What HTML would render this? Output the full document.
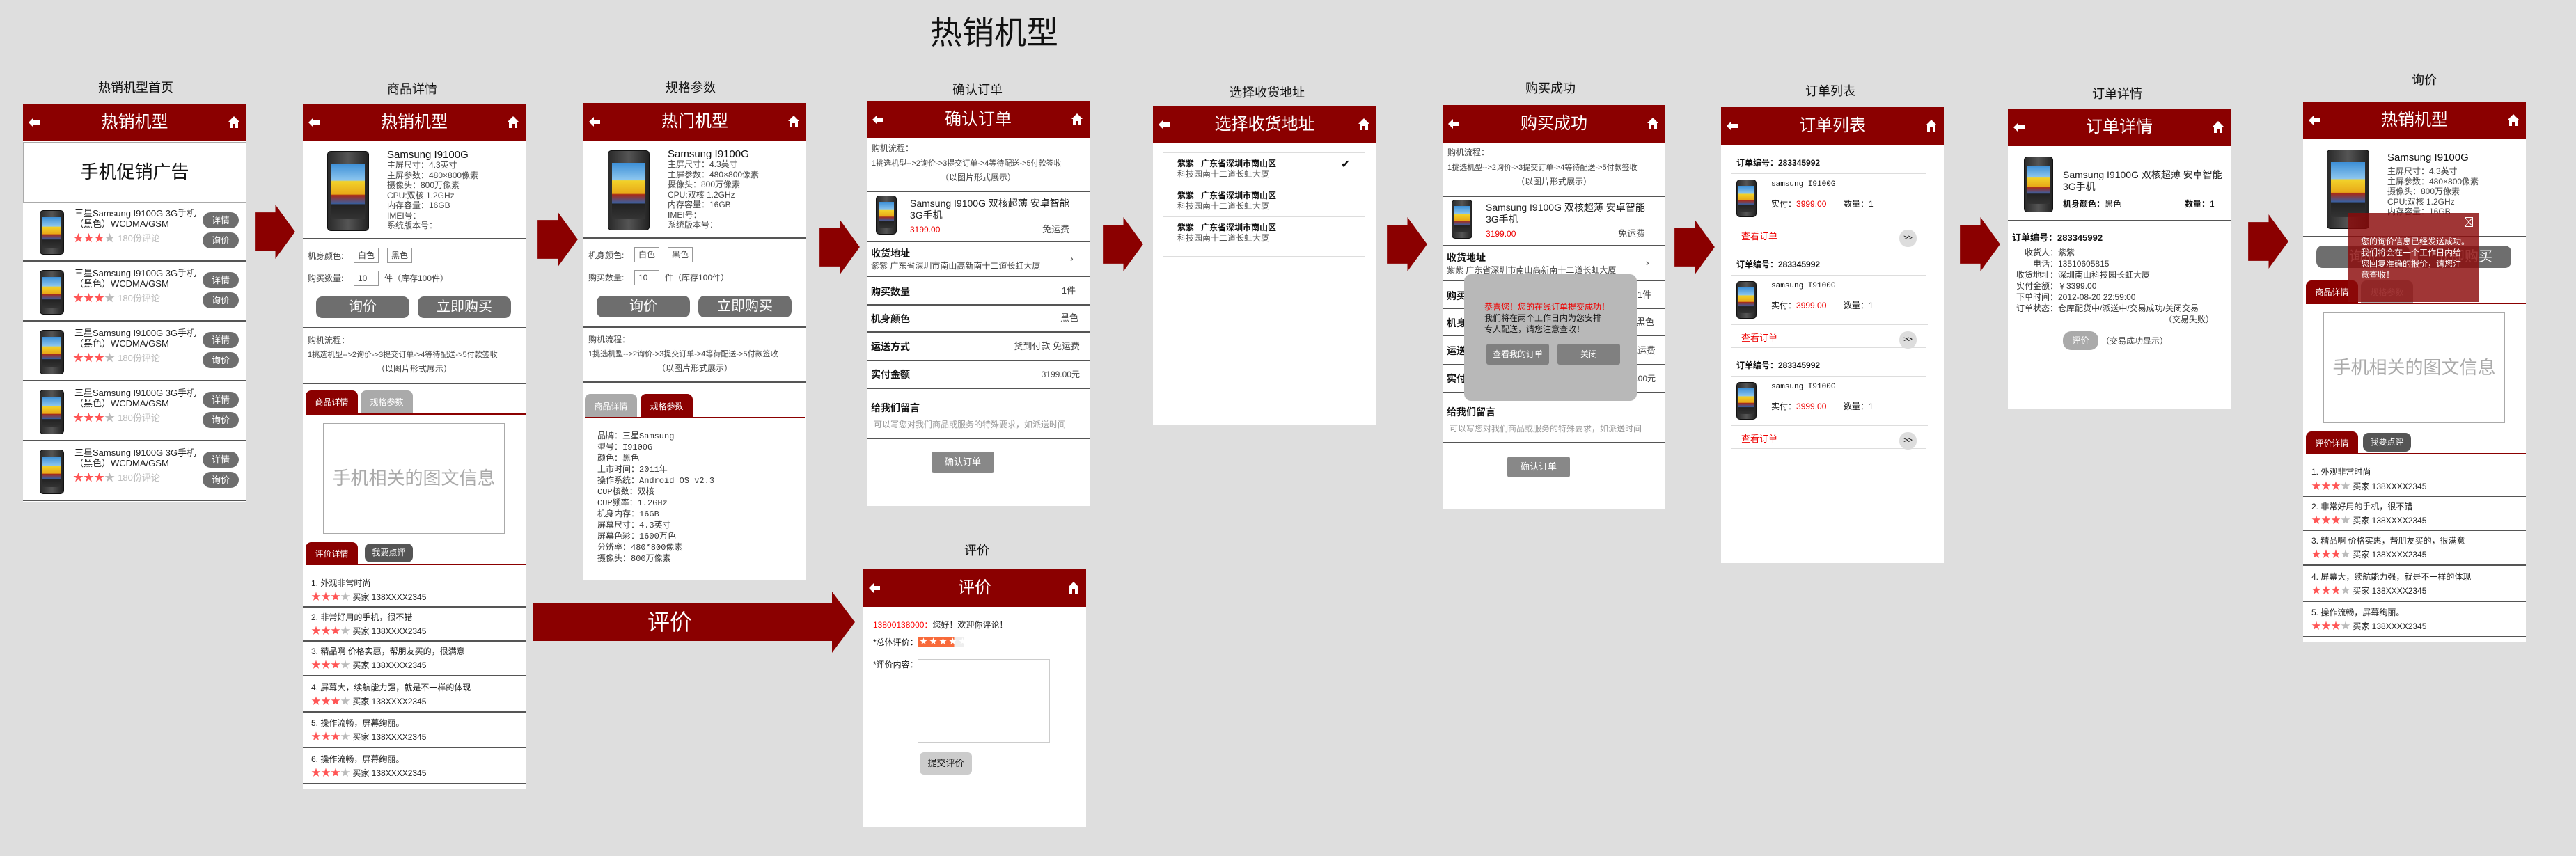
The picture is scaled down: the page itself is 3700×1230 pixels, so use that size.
<!DOCTYPE html>
<html><head><meta charset="utf-8"><style>
*{margin:0;padding:0;box-sizing:border-box}
body{width:3700px;height:1230px;background:#dedede;position:relative;overflow:hidden;font-family:"Liberation Sans","Noto Sans CJK SC",sans-serif;color:#222}
.a{position:absolute;white-space:nowrap}
.p{position:absolute;background:#fff;overflow:hidden}
.hd{position:absolute;left:0;top:0;width:100%;height:54px;background:#8b0000;color:#fff;font-size:24px;text-align:center;line-height:54px}
.hd .bk{position:absolute;left:8px;top:20px}
.hd .hm{position:absolute;right:10px;top:18px}
.lbl{position:absolute;font-size:18px;color:#111;transform:translateX(-50%);white-space:nowrap;line-height:22px}
.ph{position:absolute;background:linear-gradient(90deg,#2a2a2a,#555 50%,#222);border-radius:5px;border:1px solid #111}
.ph i{position:absolute;left:9%;right:9%;top:15%;bottom:14%;background:linear-gradient(#3d8fd6 0,#8cc6ee 30%,#f2d22a 32%,#e8a818 55%,#a82a18 57%,#3a5fa0 72%,#222 74%,#333 100%)}
.s{font-size:12px;line-height:16px;color:#444}
.ln{position:absolute;left:0;width:100%;height:2px;background:#555}
.rd{color:#f55}.gy{color:#bbb}
.btn{position:absolute;background:#6e6e6e;color:#fff;text-align:center;border-radius:9px}
.tab{position:absolute;color:#fff;text-align:center;font-size:12px;border-radius:8px 8px 0 0}
.box{position:absolute;border:1px solid #aaa;color:#aaa;text-align:center}
</style></head><body>

<div class="a" style="left:1428px;top:20px;font-size:46px;line-height:54px;transform:translateX(-50%);color:#111">热销机型</div>

<div class="lbl" style="left:195px;top:115px">热销机型首页</div>
<div class="lbl" style="left:592px;top:117px">商品详情</div>
<div class="lbl" style="left:992px;top:115px">规格参数</div>
<div class="lbl" style="left:1404px;top:118px">确认订单</div>
<div class="lbl" style="left:1820px;top:122px">选择收货地址</div>
<div class="lbl" style="left:2227px;top:116px">购买成功</div>
<div class="lbl" style="left:2629px;top:120px">订单列表</div>
<div class="lbl" style="left:3041px;top:124px">订单详情</div>
<div class="lbl" style="left:3482px;top:104px">询价</div>
<div class="lbl" style="left:1403px;top:780px">评价</div>

<!-- arrows -->
<svg class="a" style="left:366px;top:294px" width="58" height="78" viewBox="0 0 57 77"><polygon points="0,11 29,11 29,0 57,38.5 29,77 29,66 0,66" fill="#8b0000"/></svg>
<svg class="a" style="left:772px;top:305px" width="58" height="78" viewBox="0 0 57 77"><polygon points="0,11 29,11 29,0 57,38.5 29,77 29,66 0,66" fill="#8b0000"/></svg>
<svg class="a" style="left:1177px;top:316px" width="58" height="78" viewBox="0 0 57 77"><polygon points="0,11 29,11 29,0 57,38.5 29,77 29,66 0,66" fill="#8b0000"/></svg>
<svg class="a" style="left:1584px;top:312px" width="58" height="78" viewBox="0 0 57 77"><polygon points="0,11 29,11 29,0 57,38.5 29,77 29,66 0,66" fill="#8b0000"/></svg>
<svg class="a" style="left:1992px;top:312px" width="58" height="78" viewBox="0 0 57 77"><polygon points="0,11 29,11 29,0 57,38.5 29,77 29,66 0,66" fill="#8b0000"/></svg>
<svg class="a" style="left:2405px;top:316px" width="58" height="78" viewBox="0 0 57 77"><polygon points="0,11 29,11 29,0 57,38.5 29,77 29,66 0,66" fill="#8b0000"/></svg>
<svg class="a" style="left:2815px;top:312px" width="58" height="78" viewBox="0 0 57 77"><polygon points="0,11 29,11 29,0 57,38.5 29,77 29,66 0,66" fill="#8b0000"/></svg>
<svg class="a" style="left:3229px;top:308px" width="58" height="78" viewBox="0 0 57 77"><polygon points="0,11 29,11 29,0 57,38.5 29,77 29,66 0,66" fill="#8b0000"/></svg>
<svg class="a" style="left:765px;top:850px" width="464" height="88" viewBox="0 0 464 88"><polygon points="0,17 430,17 430,0 463,44 430,88 430,71 0,71" fill="#8b0000"/></svg>
<div class="a" style="left:930px;top:872px;color:#fff;font-size:32px;line-height:44px">评价</div>

<!-- Panel 1 -->
<div class="p" style="left:33px;top:149px;width:321px;height:573px">
<div class="hd"><svg class="bk" width="16" height="14" viewBox="0 0 16 14"><path d="M0 7L7 0V4H16V10H7V14Z" fill="#fff"/></svg>热销机型<svg class="hm" width="16" height="17" viewBox="0 0 16 17"><path d="M8 0L16 8H14V17H10V11H6V17H2V8H0Z" fill="#fff"/></svg></div>
<div class="a" style="left:0;top:55px;width:321px;height:87px;border:1px solid #aaa;font-size:26px;line-height:85px;text-align:center;color:#111">手机促销广告</div>
<div class="a" style="left:0;top:141px;width:321px">
 <div style="position:relative;height:86px;border-bottom:2px solid #555"><div class="ph" style="left:24px;top:12px;width:35px;height:64px"><i></i></div><div class="a" style="left:74px;top:9px;font-size:13px;line-height:15px">三星Samsung I9100G 3G手机<br>（黑色）WCDMA/GSM</div><div class="a" style="left:72px;top:44px;font-size:15px;line-height:18px"><span class="rd">★★★</span><span class="gy">★</span> <span class="gy" style="font-size:13px">180份评论</span></div><div class="btn" style="left:258px;top:15px;width:52px;height:23px;line-height:23px;font-size:13px;border-radius:12px">详情</div><div class="btn" style="left:258px;top:44px;width:52px;height:23px;line-height:23px;font-size:13px;border-radius:12px">询价</div></div>
 <div style="position:relative;height:86px;border-bottom:2px solid #555"><div class="ph" style="left:24px;top:12px;width:35px;height:64px"><i></i></div><div class="a" style="left:74px;top:9px;font-size:13px;line-height:15px">三星Samsung I9100G 3G手机<br>（黑色）WCDMA/GSM</div><div class="a" style="left:72px;top:44px;font-size:15px;line-height:18px"><span class="rd">★★★</span><span class="gy">★</span> <span class="gy" style="font-size:13px">180份评论</span></div><div class="btn" style="left:258px;top:15px;width:52px;height:23px;line-height:23px;font-size:13px;border-radius:12px">详情</div><div class="btn" style="left:258px;top:44px;width:52px;height:23px;line-height:23px;font-size:13px;border-radius:12px">询价</div></div>
 <div style="position:relative;height:86px;border-bottom:2px solid #555"><div class="ph" style="left:24px;top:12px;width:35px;height:64px"><i></i></div><div class="a" style="left:74px;top:9px;font-size:13px;line-height:15px">三星Samsung I9100G 3G手机<br>（黑色）WCDMA/GSM</div><div class="a" style="left:72px;top:44px;font-size:15px;line-height:18px"><span class="rd">★★★</span><span class="gy">★</span> <span class="gy" style="font-size:13px">180份评论</span></div><div class="btn" style="left:258px;top:15px;width:52px;height:23px;line-height:23px;font-size:13px;border-radius:12px">详情</div><div class="btn" style="left:258px;top:44px;width:52px;height:23px;line-height:23px;font-size:13px;border-radius:12px">询价</div></div>
 <div style="position:relative;height:86px;border-bottom:2px solid #555"><div class="ph" style="left:24px;top:12px;width:35px;height:64px"><i></i></div><div class="a" style="left:74px;top:9px;font-size:13px;line-height:15px">三星Samsung I9100G 3G手机<br>（黑色）WCDMA/GSM</div><div class="a" style="left:72px;top:44px;font-size:15px;line-height:18px"><span class="rd">★★★</span><span class="gy">★</span> <span class="gy" style="font-size:13px">180份评论</span></div><div class="btn" style="left:258px;top:15px;width:52px;height:23px;line-height:23px;font-size:13px;border-radius:12px">详情</div><div class="btn" style="left:258px;top:44px;width:52px;height:23px;line-height:23px;font-size:13px;border-radius:12px">询价</div></div>
 <div style="position:relative;height:86px;border-bottom:2px solid #555"><div class="ph" style="left:24px;top:12px;width:35px;height:64px"><i></i></div><div class="a" style="left:74px;top:9px;font-size:13px;line-height:15px">三星Samsung I9100G 3G手机<br>（黑色）WCDMA/GSM</div><div class="a" style="left:72px;top:44px;font-size:15px;line-height:18px"><span class="rd">★★★</span><span class="gy">★</span> <span class="gy" style="font-size:13px">180份评论</span></div><div class="btn" style="left:258px;top:15px;width:52px;height:23px;line-height:23px;font-size:13px;border-radius:12px">详情</div><div class="btn" style="left:258px;top:44px;width:52px;height:23px;line-height:23px;font-size:13px;border-radius:12px">询价</div></div>
</div>
</div>

<!-- Panel 2 商品详情 -->
<div class="p" style="left:435px;top:149px;width:320px;height:985px">
<div class="hd"><svg class="bk" width="16" height="14" viewBox="0 0 16 14"><path d="M0 7L7 0V4H16V10H7V14Z" fill="#fff"/></svg>热销机型<svg class="hm" width="16" height="17" viewBox="0 0 16 17"><path d="M8 0L16 8H14V17H10V11H6V17H2V8H0Z" fill="#fff"/></svg></div>
<div class="ph" style="left:35px;top:68px;width:60px;height:115px"><i></i></div>
<div class="a" style="left:121px;top:65px;font-size:15px;line-height:18px;color:#111">Samsung I9100G</div>
<div class="a s" style="left:121px;top:81px;line-height:14.5px">主屏尺寸：4.3英寸<br>主屏参数：480×800像素<br>摄像头：800万像素<br>CPU:双核 1.2GHz<br>内存容量：16GB<br>IMEI号：<br>系统版本号：</div>
<div class="ln" style="top:193px"></div>
<div class="a s" style="left:7px;top:211px">机身颜色:</div>
<div class="a s" style="left:73px;top:207px;width:36px;height:22px;border:1px solid #999;text-align:center;line-height:20px">白色</div>
<div class="a s" style="left:121px;top:207px;width:36px;height:22px;border:1px solid #999;text-align:center;line-height:20px">黑色</div>
<div class="a s" style="left:7px;top:243px">购买数量:</div>
<div class="a s" style="left:73px;top:240px;width:36px;height:22px;border:1px solid #999;padding-left:5px;line-height:20px">10</div>
<div class="a s" style="left:117px;top:243px">件（库存100件）</div>
<div class="btn" style="left:19px;top:277px;width:134px;height:31px;line-height:31px;font-size:20px">询价</div>
<div class="btn" style="left:165px;top:277px;width:134px;height:31px;line-height:31px;font-size:20px">立即购买</div>
<div class="ln" style="top:321px"></div>
<div class="a s" style="left:7px;top:332px">购机流程：</div>
<div class="a s" style="left:7px;top:353px;font-size:11px">1挑选机型-->2询价->3提交订单->4等待配送->5付款签收</div>
<div class="a s" style="left:0;width:320px;text-align:center;top:373px">（以图片形式展示）</div>
<div class="ln" style="top:401px"></div>
<div class="tab" style="left:4px;top:412px;width:75px;height:33px;line-height:35px;background:#8b0000">商品详情</div>
<div class="tab" style="left:83px;top:412px;width:75px;height:33px;line-height:35px;background:#aaa">规格参数</div>
<div class="a" style="left:4px;top:444px;width:316px;height:3px;background:#8b0000"></div>
<div class="box" style="left:29px;top:459px;width:261px;height:159px;font-size:26px;line-height:157px">手机相关的图文信息</div>
<div class="tab" style="left:4px;top:630px;width:75px;height:33px;line-height:35px;background:#8b0000">评价详情</div>
<div class="tab" style="left:89px;top:632px;width:69px;height:27px;line-height:27px;background:#555;border-radius:8px">我要点评</div>
<div class="a" style="left:4px;top:661px;width:316px;height:2px;background:#8b0000"></div>
<div class="a s" style="left:12px;top:681px;color:#222">1. 外观非常时尚</div><div class="a" style="left:12px;top:699px;font-size:12px;line-height:18px"><span class="rd" style="font-size:14px">★★★</span><span class="gy" style="font-size:14px">★</span> 买家 138XXXX2345</div>
<div class="ln" style="top:722px"></div>
<div class="a s" style="left:12px;top:730px;color:#222">2. 非常好用的手机，很不错</div><div class="a" style="left:12px;top:748px;font-size:12px;line-height:18px"><span class="rd" style="font-size:14px">★★★</span><span class="gy" style="font-size:14px">★</span> 买家 138XXXX2345</div>
<div class="ln" style="top:771px"></div>
<div class="a s" style="left:12px;top:779px;color:#222">3. 精品啊 价格实惠，帮朋友买的，很满意</div><div class="a" style="left:12px;top:797px;font-size:12px;line-height:18px"><span class="rd" style="font-size:14px">★★★</span><span class="gy" style="font-size:14px">★</span> 买家 138XXXX2345</div>
<div class="ln" style="top:821px"></div>
<div class="a s" style="left:12px;top:831px;color:#222">4. 屏幕大，续航能力强，就是不一样的体现</div><div class="a" style="left:12px;top:849px;font-size:12px;line-height:18px"><span class="rd" style="font-size:14px">★★★</span><span class="gy" style="font-size:14px">★</span> 买家 138XXXX2345</div>
<div class="ln" style="top:873px"></div>
<div class="a s" style="left:12px;top:882px;color:#222">5. 操作流畅，屏幕绚丽。</div><div class="a" style="left:12px;top:900px;font-size:12px;line-height:18px"><span class="rd" style="font-size:14px">★★★</span><span class="gy" style="font-size:14px">★</span> 买家 138XXXX2345</div>
<div class="ln" style="top:924px"></div>
<div class="a s" style="left:12px;top:934px;color:#222">6. 操作流畅，屏幕绚丽。</div><div class="a" style="left:12px;top:952px;font-size:12px;line-height:18px"><span class="rd" style="font-size:14px">★★★</span><span class="gy" style="font-size:14px">★</span> 买家 138XXXX2345</div>
<div class="ln" style="top:976px"></div>
</div>

<!-- Panel 3 规格参数 -->
<div class="p" style="left:838px;top:148px;width:320px;height:685px">
<div class="hd"><svg class="bk" width="16" height="14" viewBox="0 0 16 14"><path d="M0 7L7 0V4H16V10H7V14Z" fill="#fff"/></svg>热门机型<svg class="hm" width="16" height="17" viewBox="0 0 16 17"><path d="M8 0L16 8H14V17H10V11H6V17H2V8H0Z" fill="#fff"/></svg></div>
<div class="ph" style="left:35px;top:68px;width:60px;height:115px"><i></i></div>
<div class="a" style="left:121px;top:65px;font-size:15px;line-height:18px;color:#111">Samsung I9100G</div>
<div class="a s" style="left:121px;top:81px;line-height:14.5px">主屏尺寸：4.3英寸<br>主屏参数：480×800像素<br>摄像头：800万像素<br>CPU:双核 1.2GHz<br>内存容量：16GB<br>IMEI号：<br>系统版本号：</div>
<div class="ln" style="top:193px"></div>
<div class="a s" style="left:7px;top:211px">机身颜色:</div>
<div class="a s" style="left:73px;top:207px;width:36px;height:22px;border:1px solid #999;text-align:center;line-height:20px">白色</div>
<div class="a s" style="left:121px;top:207px;width:36px;height:22px;border:1px solid #999;text-align:center;line-height:20px">黑色</div>
<div class="a s" style="left:7px;top:243px">购买数量:</div>
<div class="a s" style="left:73px;top:240px;width:36px;height:22px;border:1px solid #999;padding-left:5px;line-height:20px">10</div>
<div class="a s" style="left:117px;top:243px">件（库存100件）</div>
<div class="btn" style="left:19px;top:277px;width:134px;height:31px;line-height:31px;font-size:20px">询价</div>
<div class="btn" style="left:165px;top:277px;width:134px;height:31px;line-height:31px;font-size:20px">立即购买</div>
<div class="ln" style="top:321px"></div>
<div class="a s" style="left:7px;top:332px">购机流程：</div>
<div class="a s" style="left:7px;top:353px;font-size:11px">1挑选机型-->2询价->3提交订单->4等待配送->5付款签收</div>
<div class="a s" style="left:0;width:320px;text-align:center;top:373px">（以图片形式展示）</div>
<div class="ln" style="top:400px"></div>
<div class="tab" style="left:2px;top:418px;width:75px;height:34px;line-height:36px;background:#aaa">商品详情</div>
<div class="tab" style="left:82px;top:418px;width:75px;height:34px;line-height:36px;background:#8b0000">规格参数</div>
<div class="a" style="left:2px;top:451px;width:316px;height:2px;background:#8b0000"></div>
<div class="a" style="left:20px;top:471px;font-size:12px;line-height:16px;color:#333;font-family:'Liberation Mono','Noto Sans CJK SC',monospace">品牌：三星Samsung<br>型号：I9100G<br>颜色：黑色<br>上市时间：2011年<br>操作系统：Android OS v2.3<br>CUP核数：双核<br>CUP频率：1.2GHz<br>机身内存：16GB<br>屏幕尺寸：4.3英寸<br>屏幕色彩：1600万色<br>分辨率：480*800像素<br>摄像头：800万像素</div>
</div>

<!-- 确认订单 -->
<div class="p" style="left:1245px;top:145px;width:320px;height:582px">
<div class="hd"><svg class="bk" width="16" height="14" viewBox="0 0 16 14"><path d="M0 7L7 0V4H16V10H7V14Z" fill="#fff"/></svg>确认订单<svg class="hm" width="16" height="17" viewBox="0 0 16 17"><path d="M8 0L16 8H14V17H10V11H6V17H2V8H0Z" fill="#fff"/></svg></div>
<div class="a s" style="left:7px;top:60px">购机流程：</div>
<div class="a s" style="left:7px;top:82px;font-size:11px">1挑选机型-->2询价->3提交订单->4等待配送->5付款签收</div>
<div class="a s" style="left:0;width:320px;text-align:center;top:102px">（以图片形式展示）</div>
<div class="ln" style="top:129px"></div>
<div class="ph" style="left:13px;top:136px;width:30px;height:56px"><i></i></div>
<div class="a" style="left:62px;top:139px;font-size:14px;line-height:17px;color:#222">Samsung I9100G 双核超薄 安卓智能<br>3G手机</div>
<div class="a" style="left:62px;top:178px;font-size:12px;color:#e00">3199.00</div>
<div class="a s" style="left:252px;top:177px;font-size:13px">免运费</div>
<div class="ln" style="top:201px"></div>
<div class="a" style="left:6px;top:209px;font-size:14px;font-weight:bold;color:#111">收货地址</div>
<div class="a s" style="left:6px;top:229px">紫紫 广东省深圳市南山高新南十二道长虹大厦</div>
<div class="a" style="left:292px;top:218px;font-size:14px;color:#444">›</div>
<div class="ln" style="top:251px"></div>
<div class="a" style="left:6px;top:264px;font-size:14px;font-weight:bold;color:#111">购买数量</div><div class="a s" style="right:20px;top:265px;font-size:13px">1件</div>
<div class="ln" style="top:292px"></div>
<div class="a" style="left:6px;top:303px;font-size:14px;font-weight:bold;color:#111">机身颜色</div><div class="a s" style="right:16px;top:304px;font-size:13px">黑色</div>
<div class="ln" style="top:331px"></div>
<div class="a" style="left:6px;top:343px;font-size:14px;font-weight:bold;color:#111">运送方式</div><div class="a s" style="right:14px;top:345px;font-size:13px">货到付款 免运费</div>
<div class="ln" style="top:372px"></div>
<div class="a" style="left:6px;top:383px;font-size:14px;font-weight:bold;color:#111">实付金额</div><div class="a s" style="right:14px;top:385px;font-size:12px">3199.00元</div>
<div class="ln" style="top:412px"></div>
<div class="a" style="left:6px;top:431px;font-size:14px;font-weight:bold;color:#111">给我们留言</div>
<div class="a s" style="left:10px;top:457px;color:#999">可以写您对我们商品或服务的特殊要求，如派送时间</div>
<div class="ln" style="top:484px"></div>
<div class="a" style="left:93px;top:504px;width:90px;height:30px;background:#888;color:#fff;font-size:13px;line-height:30px;text-align:center;border-radius:3px">确认订单</div>
</div>

<!-- 选择收货地址 -->
<div class="p" style="left:1656px;top:152px;width:321px;height:458px">
<div class="hd"><svg class="bk" width="16" height="14" viewBox="0 0 16 14"><path d="M0 7L7 0V4H16V10H7V14Z" fill="#fff"/></svg>选择收货地址<svg class="hm" width="16" height="17" viewBox="0 0 16 17"><path d="M8 0L16 8H14V17H10V11H6V17H2V8H0Z" fill="#fff"/></svg></div>
<div class="a" style="left:14px;top:67px;width:291px;height:150px;border:1px solid #ddd"></div>
<div class="a" style="left:15px;top:112px;width:289px;height:1px;background:#ddd"></div>
<div class="a" style="left:15px;top:159px;width:289px;height:1px;background:#ddd"></div>
<div class="a" style="left:35px;top:76px;font-size:12px;line-height:15px;color:#111"><b>紫紫&nbsp;&nbsp;&nbsp;广东省深圳市南山区</b><br><span style="color:#555">科技园南十二道长虹大厦</span></div>
<div class="a" style="left:35px;top:122px;font-size:12px;line-height:15px;color:#111"><b>紫紫&nbsp;&nbsp;&nbsp;广东省深圳市南山区</b><br><span style="color:#555">科技园南十二道长虹大厦</span></div>
<div class="a" style="left:35px;top:168px;font-size:12px;line-height:15px;color:#111"><b>紫紫&nbsp;&nbsp;&nbsp;广东省深圳市南山区</b><br><span style="color:#555">科技园南十二道长虹大厦</span></div>
<div class="a" style="left:270px;top:74px;font-size:16px;color:#111">✔</div>
</div>

<!-- 购买成功 -->
<div class="p" style="left:2072px;top:151px;width:320px;height:580px">
<div class="hd"><svg class="bk" width="16" height="14" viewBox="0 0 16 14"><path d="M0 7L7 0V4H16V10H7V14Z" fill="#fff"/></svg>购买成功<svg class="hm" width="16" height="17" viewBox="0 0 16 17"><path d="M8 0L16 8H14V17H10V11H6V17H2V8H0Z" fill="#fff"/></svg></div>
<div class="a s" style="left:7px;top:60px">购机流程：</div>
<div class="a s" style="left:7px;top:82px;font-size:11px">1挑选机型-->2询价->3提交订单->4等待配送->5付款签收</div>
<div class="a s" style="left:0;width:320px;text-align:center;top:102px">（以图片形式展示）</div>
<div class="ln" style="top:130px"></div>
<div class="ph" style="left:13px;top:136px;width:30px;height:56px"><i></i></div>
<div class="a" style="left:62px;top:139px;font-size:14px;line-height:17px;color:#222">Samsung I9100G 双核超薄 安卓智能<br>3G手机</div>
<div class="a" style="left:62px;top:178px;font-size:12px;color:#e00">3199.00</div>
<div class="a s" style="left:252px;top:177px;font-size:13px">免运费</div>
<div class="ln" style="top:201px"></div>
<div class="a" style="left:6px;top:209px;font-size:14px;font-weight:bold;color:#111">收货地址</div>
<div class="a s" style="left:6px;top:229px">紫紫 广东省深圳市南山高新南十二道长虹大厦</div>
<div class="a" style="left:292px;top:218px;font-size:14px;color:#444">›</div>
<div class="ln" style="top:251px"></div>
<div class="a" style="left:6px;top:264px;font-size:14px;font-weight:bold;color:#111">购买数量</div><div class="a s" style="right:20px;top:265px;font-size:13px">1件</div>
<div class="ln" style="top:291px"></div>
<div class="a" style="left:6px;top:303px;font-size:14px;font-weight:bold;color:#111">机身颜色</div><div class="a s" style="right:16px;top:304px;font-size:13px">黑色</div>
<div class="ln" style="top:330px"></div>
<div class="a" style="left:6px;top:343px;font-size:14px;font-weight:bold;color:#111">运送方式</div><div class="a s" style="right:14px;top:345px;font-size:13px">货到付款 免运费</div>
<div class="ln" style="top:372px"></div>
<div class="a" style="left:6px;top:383px;font-size:14px;font-weight:bold;color:#111">实付金额</div><div class="a s" style="right:14px;top:385px;font-size:12px">3199.00元</div>
<div class="ln" style="top:412px"></div>
<div class="a" style="left:6px;top:431px;font-size:14px;font-weight:bold;color:#111">给我们留言</div>
<div class="a s" style="left:10px;top:457px;color:#999">可以写您对我们商品或服务的特殊要求，如派送时间</div>
<div class="ln" style="top:484px"></div>
<div class="a" style="left:93px;top:505px;width:90px;height:30px;background:#888;color:#fff;font-size:13px;line-height:30px;text-align:center;border-radius:3px">确认订单</div>
<div class="a" style="left:31px;top:243px;width:248px;height:182px;background:#b8b8b8;border-radius:10px">
 <div class="a" style="left:29px;top:39px;font-size:12px;line-height:16px;color:#111"><span style="color:#e00">恭喜您！您的在线订单提交成功！</span><br>我们将在两个工作日内为您安排<br>专人配送，请您注意查收！</div>
 <div class="a" style="left:32px;top:100px;width:90px;height:30px;background:#808080;color:#fff;font-size:12px;line-height:30px;text-align:center;border-radius:3px">查看我的订单</div>
 <div class="a" style="left:134px;top:100px;width:90px;height:30px;background:#808080;color:#fff;font-size:12px;line-height:30px;text-align:center;border-radius:3px">关闭</div>
</div>
</div>

<!-- 订单列表 -->
<div class="p" style="left:2472px;top:154px;width:320px;height:655px">
<div class="hd"><svg class="bk" width="16" height="14" viewBox="0 0 16 14"><path d="M0 7L7 0V4H16V10H7V14Z" fill="#fff"/></svg>订单列表<svg class="hm" width="16" height="17" viewBox="0 0 16 17"><path d="M8 0L16 8H14V17H10V11H6V17H2V8H0Z" fill="#fff"/></svg></div>
<div class="a" style="left:0;top:72px;width:320px;height:140px">
 <div class="a" style="left:22px;top:0;font-size:12px;font-weight:bold;color:#111;line-height:16px">订单编号：283345992</div>
 <div class="a" style="left:14px;top:23px;width:281px;height:105px;border:1px solid #ddd"></div>
 <div class="a" style="left:14px;top:94px;width:283px;height:1px;background:#ddd"></div>
 <div class="ph" style="left:22px;top:32px;width:29px;height:54px"><i></i></div>
 <div class="a" style="left:72px;top:33px;font-size:11px;color:#111;font-family:'Liberation Mono',monospace">samsung I9100G</div>
 <div class="a" style="left:72px;top:58px;font-size:12px;color:#111">实付：<span style="color:#e00">3999.00</span></div>
 <div class="a" style="left:176px;top:58px;font-size:12px;color:#111">数量：1</div>
 <div class="a" style="left:29px;top:103px;font-size:13px;color:#e00">查看订单</div>
 <div class="a" style="left:256px;top:104px;width:25px;height:25px;border-radius:12px;background:#ddd;font-size:11px;line-height:25px;text-align:center;color:#111">&gt;&gt;</div>
</div>
<div class="a" style="left:0;top:218px;width:320px;height:140px">
 <div class="a" style="left:22px;top:0;font-size:12px;font-weight:bold;color:#111;line-height:16px">订单编号：283345992</div>
 <div class="a" style="left:14px;top:23px;width:281px;height:105px;border:1px solid #ddd"></div>
 <div class="a" style="left:14px;top:94px;width:283px;height:1px;background:#ddd"></div>
 <div class="ph" style="left:22px;top:32px;width:29px;height:54px"><i></i></div>
 <div class="a" style="left:72px;top:33px;font-size:11px;color:#111;font-family:'Liberation Mono',monospace">samsung I9100G</div>
 <div class="a" style="left:72px;top:58px;font-size:12px;color:#111">实付：<span style="color:#e00">3999.00</span></div>
 <div class="a" style="left:176px;top:58px;font-size:12px;color:#111">数量：1</div>
 <div class="a" style="left:29px;top:103px;font-size:13px;color:#e00">查看订单</div>
 <div class="a" style="left:256px;top:104px;width:25px;height:25px;border-radius:12px;background:#ddd;font-size:11px;line-height:25px;text-align:center;color:#111">&gt;&gt;</div>
</div>
<div class="a" style="left:0;top:363px;width:320px;height:140px">
 <div class="a" style="left:22px;top:0;font-size:12px;font-weight:bold;color:#111;line-height:16px">订单编号：283345992</div>
 <div class="a" style="left:14px;top:23px;width:281px;height:105px;border:1px solid #ddd"></div>
 <div class="a" style="left:14px;top:94px;width:283px;height:1px;background:#ddd"></div>
 <div class="ph" style="left:22px;top:32px;width:29px;height:54px"><i></i></div>
 <div class="a" style="left:72px;top:33px;font-size:11px;color:#111;font-family:'Liberation Mono',monospace">samsung I9100G</div>
 <div class="a" style="left:72px;top:58px;font-size:12px;color:#111">实付：<span style="color:#e00">3999.00</span></div>
 <div class="a" style="left:176px;top:58px;font-size:12px;color:#111">数量：1</div>
 <div class="a" style="left:29px;top:103px;font-size:13px;color:#e00">查看订单</div>
 <div class="a" style="left:256px;top:104px;width:25px;height:25px;border-radius:12px;background:#ddd;font-size:11px;line-height:25px;text-align:center;color:#111">&gt;&gt;</div>
</div>
</div>

<!-- 订单详情 -->
<div class="p" style="left:2884px;top:156px;width:320px;height:432px">
<div class="hd"><svg class="bk" width="16" height="14" viewBox="0 0 16 14"><path d="M0 7L7 0V4H16V10H7V14Z" fill="#fff"/></svg>订单详情<svg class="hm" width="16" height="17" viewBox="0 0 16 17"><path d="M8 0L16 8H14V17H10V11H6V17H2V8H0Z" fill="#fff"/></svg></div>
<div class="ph" style="left:23px;top:69px;width:42px;height:80px"><i></i></div>
<div class="a" style="left:79px;top:87px;font-size:14px;line-height:17px;color:#222">Samsung I9100G 双核超薄 安卓智能<br>3G手机</div>
<div class="a" style="left:79px;top:128px;font-size:12px;color:#111"><b>机身颜色：</b>黑色</div>
<div class="a" style="left:254px;top:128px;font-size:12px;color:#111"><b>数量：</b>1</div>
<div class="ln" style="top:160px"></div>
<div class="a" style="left:6px;top:175px;font-size:13px;color:#111"><b>订单编号：</b><b>283345992</b></div>
<div class="a" style="left:0;top:199px;width:72px;text-align:right;font-size:12px;line-height:16px;color:#333">收货人：<br>电话：<br>收货地址：<br>实付金额：<br>下单时间：<br>订单状态：</div>
<div class="a" style="left:72px;top:199px;font-size:12px;line-height:16px;color:#333">紫紫<br>13510605815<br>深圳南山科技园长虹大厦<br>￥3399.00<br>2012-08-20 22:59:00<br>仓库配货中/派送中/交易成功/关闭交易<br><span style="padding-left:152px">（交易失败）</span></div>
<div class="a" style="left:79px;top:320px;width:51px;height:27px;background:#aaa;border-radius:12px;color:#fff;font-size:12px;line-height:27px;text-align:center">评价</div>
<div class="a s" style="left:134px;top:326px">（交易成功显示）</div>
</div>

<!-- 询价 -->
<div class="p" style="left:3308px;top:146px;width:320px;height:777px">
<div class="hd"><svg class="bk" width="16" height="14" viewBox="0 0 16 14"><path d="M0 7L7 0V4H16V10H7V14Z" fill="#fff"/></svg>热销机型<svg class="hm" width="16" height="17" viewBox="0 0 16 17"><path d="M8 0L16 8H14V17H10V11H6V17H2V8H0Z" fill="#fff"/></svg></div>
<div class="ph" style="left:34px;top:69px;width:61px;height:114px"><i></i></div>
<div class="a" style="left:121px;top:72px;font-size:15px;line-height:18px;color:#111">Samsung I9100G</div>
<div class="a s" style="left:121px;top:93px;line-height:14.5px">主屏尺寸：4.3英寸<br>主屏参数：480×800像素<br>摄像头：800万像素<br>CPU:双核 1.2GHz<br>内存容量：16GB</div>
<div class="ln" style="top:193px"></div>
<div class="btn" style="left:19px;top:207px;width:134px;height:32px;line-height:32px;font-size:20px">询价</div>
<div class="btn" style="left:165px;top:207px;width:134px;height:32px;line-height:32px;font-size:20px">立即购买</div>
<div class="tab" style="left:4px;top:257px;width:75px;height:33px;line-height:35px;background:#8b0000">商品详情</div>
<div class="tab" style="left:83px;top:257px;width:75px;height:33px;line-height:35px;background:#aaa">规格参数</div>
<div class="a" style="left:4px;top:289px;width:316px;height:2px;background:#8b0000"></div>
<div class="a" style="left:64px;top:160px;width:189px;height:128px;background:rgba(139,10,10,0.82)">
 <div class="a" style="left:168px;top:6px;width:12px;height:14px;border:1px solid #fff"></div>
 <svg class="a" style="left:168px;top:6px" width="12" height="14"><path d="M1 1L11 13M11 1L1 13" stroke="#fff" stroke-width="1"/></svg>
 <div class="a" style="left:19px;top:33px;font-size:12px;line-height:16px;color:#fff">您的询价信息已经发送成功。<br>我们将会在一个工作日内给<br>您回复准确的报价，请您注<br>意查收！</div>
</div>
<div class="box" style="left:29px;top:303px;width:261px;height:159px;font-size:26px;line-height:157px">手机相关的图文信息</div>
<div class="tab" style="left:4px;top:474px;width:75px;height:32px;line-height:34px;background:#8b0000">评价详情</div>
<div class="tab" style="left:86px;top:476px;width:69px;height:27px;line-height:27px;background:#555;border-radius:8px">我要点评</div>
<div class="a" style="left:4px;top:505px;width:316px;height:2px;background:#8b0000"></div>
<div class="a s" style="left:12px;top:524px;color:#222">1. 外观非常时尚</div><div class="a" style="left:12px;top:543px;font-size:12px;line-height:18px"><span class="rd" style="font-size:14px">★★★</span><span class="gy" style="font-size:14px">★</span> 买家 138XXXX2345</div>
<div class="ln" style="top:566px"></div>
<div class="a s" style="left:12px;top:574px;color:#222">2. 非常好用的手机，很不错</div><div class="a" style="left:12px;top:592px;font-size:12px;line-height:18px"><span class="rd" style="font-size:14px">★★★</span><span class="gy" style="font-size:14px">★</span> 买家 138XXXX2345</div>
<div class="ln" style="top:615px"></div>
<div class="a s" style="left:12px;top:623px;color:#222">3. 精品啊 价格实惠，帮朋友买的，很满意</div><div class="a" style="left:12px;top:641px;font-size:12px;line-height:18px"><span class="rd" style="font-size:14px">★★★</span><span class="gy" style="font-size:14px">★</span> 买家 138XXXX2345</div>
<div class="ln" style="top:665px"></div>
<div class="a s" style="left:12px;top:675px;color:#222">4. 屏幕大，续航能力强，就是不一样的体现</div><div class="a" style="left:12px;top:693px;font-size:12px;line-height:18px"><span class="rd" style="font-size:14px">★★★</span><span class="gy" style="font-size:14px">★</span> 买家 138XXXX2345</div>
<div class="ln" style="top:717px"></div>
<div class="a s" style="left:12px;top:726px;color:#222">5. 操作流畅，屏幕绚丽。</div><div class="a" style="left:12px;top:744px;font-size:12px;line-height:18px"><span class="rd" style="font-size:14px">★★★</span><span class="gy" style="font-size:14px">★</span> 买家 138XXXX2345</div>
<div class="ln" style="top:768px"></div>
</div>

<!-- 评价 -->
<div class="p" style="left:1240px;top:818px;width:320px;height:370px">
<div class="hd"><svg class="bk" width="16" height="14" viewBox="0 0 16 14"><path d="M0 7L7 0V4H16V10H7V14Z" fill="#fff"/></svg>评价<svg class="hm" width="16" height="17" viewBox="0 0 16 17"><path d="M8 0L16 8H14V17H10V11H6V17H2V8H0Z" fill="#fff"/></svg></div>
<div class="a" style="left:14px;top:72px;font-size:12px;line-height:16px;color:#222"><span style="color:#f00">13800138000：</span>您好！欢迎你评论！</div>
<div class="a" style="left:14px;top:97px;font-size:12px;line-height:16px;color:#111">*总体评价：</div>
<div class="a" style="left:79px;top:98px;width:66px;height:13px;background:linear-gradient(90deg,#f86a3a 0 78%,#eee 78%)"></div>
<div class="a" style="left:79px;top:96px;font-size:11px;color:#fff;letter-spacing:3px;line-height:16px;padding-left:2px">★★★★★</div>
<div class="a" style="left:14px;top:129px;font-size:12px;line-height:16px;color:#111">*评价内容：</div>
<div class="a" style="left:78px;top:129px;width:190px;height:120px;border:1px solid #ccc"></div>
<div class="a" style="left:81px;top:263px;width:75px;height:32px;background:#ccc;border-radius:6px;font-size:13px;line-height:32px;text-align:center;color:#111">提交评价</div>
</div>

</body></html>
